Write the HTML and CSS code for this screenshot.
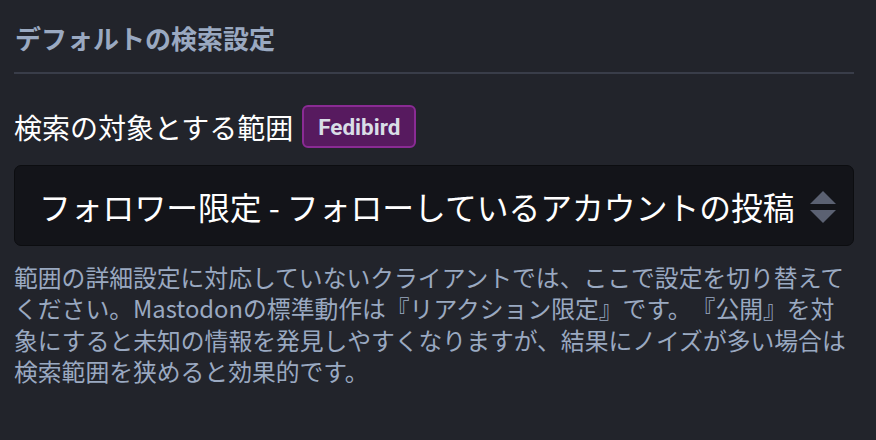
FILE: index.html
```html
<!DOCTYPE html>
<html lang="ja">
<head>
<meta charset="utf-8">
<link rel="stylesheet" href="styles.css">
</head>
<body>
<div class="page">
  <h4 class="heading">デフォルトの検索設定</h4>
  <div class="field">
    <div class="label-row">
      <label class="label">検索の対象とする範囲</label>
      <span class="badge">Fedibird</span>
    </div>
    <div class="select">
      <span class="select-text">フォロワー限定 - フォローしているアカウントの投稿</span>
      <svg class="arrows" width="26" height="32" viewBox="0 0 26 32">
        <path d="M13 0 L26 13 L0 13 Z" fill="#5b6172"/>
        <path d="M0 19 L26 19 L13 32 Z" fill="#5b6172"/>
      </svg>
    </div>
    <p class="hint">範囲の詳細設定に対応していないクライアントでは、ここで設定を切り替えてください。Mastodonの標準動作は『リアクション限定』です。『公開』を対象にすると未知の情報を発見しやすくなりますが、結果にノイズが多い場合は検索範囲を狭めると効果的です。</p>
  </div>
</div>
</body>
</html>
```
FILE: styles.css
```css
html, body {
  margin: 0;
  padding: 0;
  background: #22242b;
  width: 876px;
  height: 440px;
  overflow: hidden;
}
.page {
  padding: 0 22px 0 14px;
  font-family: "Noto Sans CJK JP", "Noto Sans", sans-serif;
  text-spacing-trim: space-all;
}
.heading {
  margin: 0;
  padding: 20px 0 16px 1px;
  font-size: 26px;
  line-height: 36px;
  font-weight: 700;
  color: #9aa9c1;
  border-bottom: 2px solid #393d49;
}
.label-row {
  display: flex;
  align-items: center;
  margin-top: 31px;
  height: 43px;
}
.label {
  font-size: 28px;
  color: #ffffff;
  line-height: 42px;
}
.badge {
  margin-left: 9px;
  height: 43px;
  box-sizing: border-box;
  padding: 0 14px;
  display: flex;
  align-items: center;
  background: #571a5f;
  border: 2px solid #8a2b94;
  border-radius: 6px;
  color: #d9dde6;
  font-family: Roboto, "Noto Sans", sans-serif;
  font-weight: 700;
  font-size: 22.5px;
}
.select {
  margin-top: 17px;
  height: 81px;
  box-sizing: border-box;
  background: #131419;
  border: 1px solid #0c0d10;
  border-radius: 7px;
  display: flex;
  align-items: center;
  justify-content: space-between;
  padding: 0 17px 0 24px;
}
.select-text {
  font-size: 31.8px;
  color: #ffffff;
  white-space: nowrap;
}
.arrows {
  display: block;
  margin-top: 2px;
}
.hint {
  margin: 15px 0 0 0;
  font-size: 23.8px;
  line-height: 31.3px;
  color: #9aa9c1;
}
```
